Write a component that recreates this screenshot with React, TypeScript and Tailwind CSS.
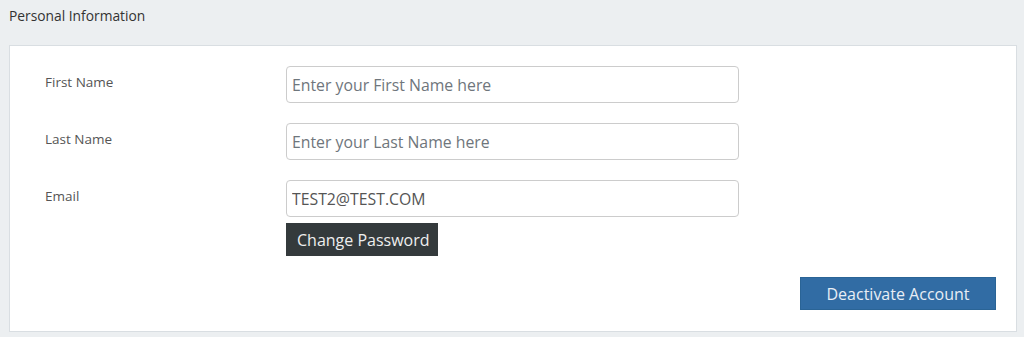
import React from "react";

export default function App() {
  const font = { fontFamily: '"Open Sans", "Noto Sans", sans-serif' };
  return (
    <div className="w-[1024px] h-[337px] bg-[#eceff1] overflow-hidden" style={font}>
      <div className="h-[45px] pl-[9px] pt-[6px] text-[13.8px] leading-[20px] text-[#333333]">
        Personal Information
      </div>
      <div className="ml-[9px] w-[1008px] h-[287px] bg-white border border-[#d9dee2] pt-[20px] pl-[35px] pr-[20px]">
        <div className="flex flex-col gap-[20px]">
          {[
            { label: "First Name", ph: "Enter your First Name here", v: "" },
            { label: "Last Name", ph: "Enter your Last Name here", v: "" },
            { label: "Email", ph: "", v: "TEST2@TEST.COM" },
          ].map((r) => (
            <div key={r.label} className="flex items-start">
              <div className="w-[241px] pt-[6px] text-[13.5px] leading-[20px] text-[#555555]">{r.label}</div>
              <input
                className="w-[453px] h-[37px] border border-[#cccccc] rounded-[4px] px-[5px] text-[15.8px] text-[#555555] placeholder:text-[#6f767c] outline-none"
                style={font}
                placeholder={r.ph}
                defaultValue={r.v}
              />
            </div>
          ))}
        </div>
        <div className="pl-[241px] mt-[6px]">
          <button
            className="h-[33px] w-[152px] bg-[#343a3c] text-[#eeeeee] text-[16px] leading-[31px] pt-[2px] pl-[11px] text-left whitespace-nowrap"
            style={font}
          >
            Change Password
          </button>
        </div>
        <div className="flex justify-end mt-[21px]">
          <button
            className="h-[33px] w-[196px] bg-[#316ca4] border border-[#2a6496] text-[#e8eef5] text-[16px] leading-[31px] pt-[1px] whitespace-nowrap"
            style={font}
          >
            Deactivate Account
          </button>
        </div>
      </div>
    </div>
  );
}
